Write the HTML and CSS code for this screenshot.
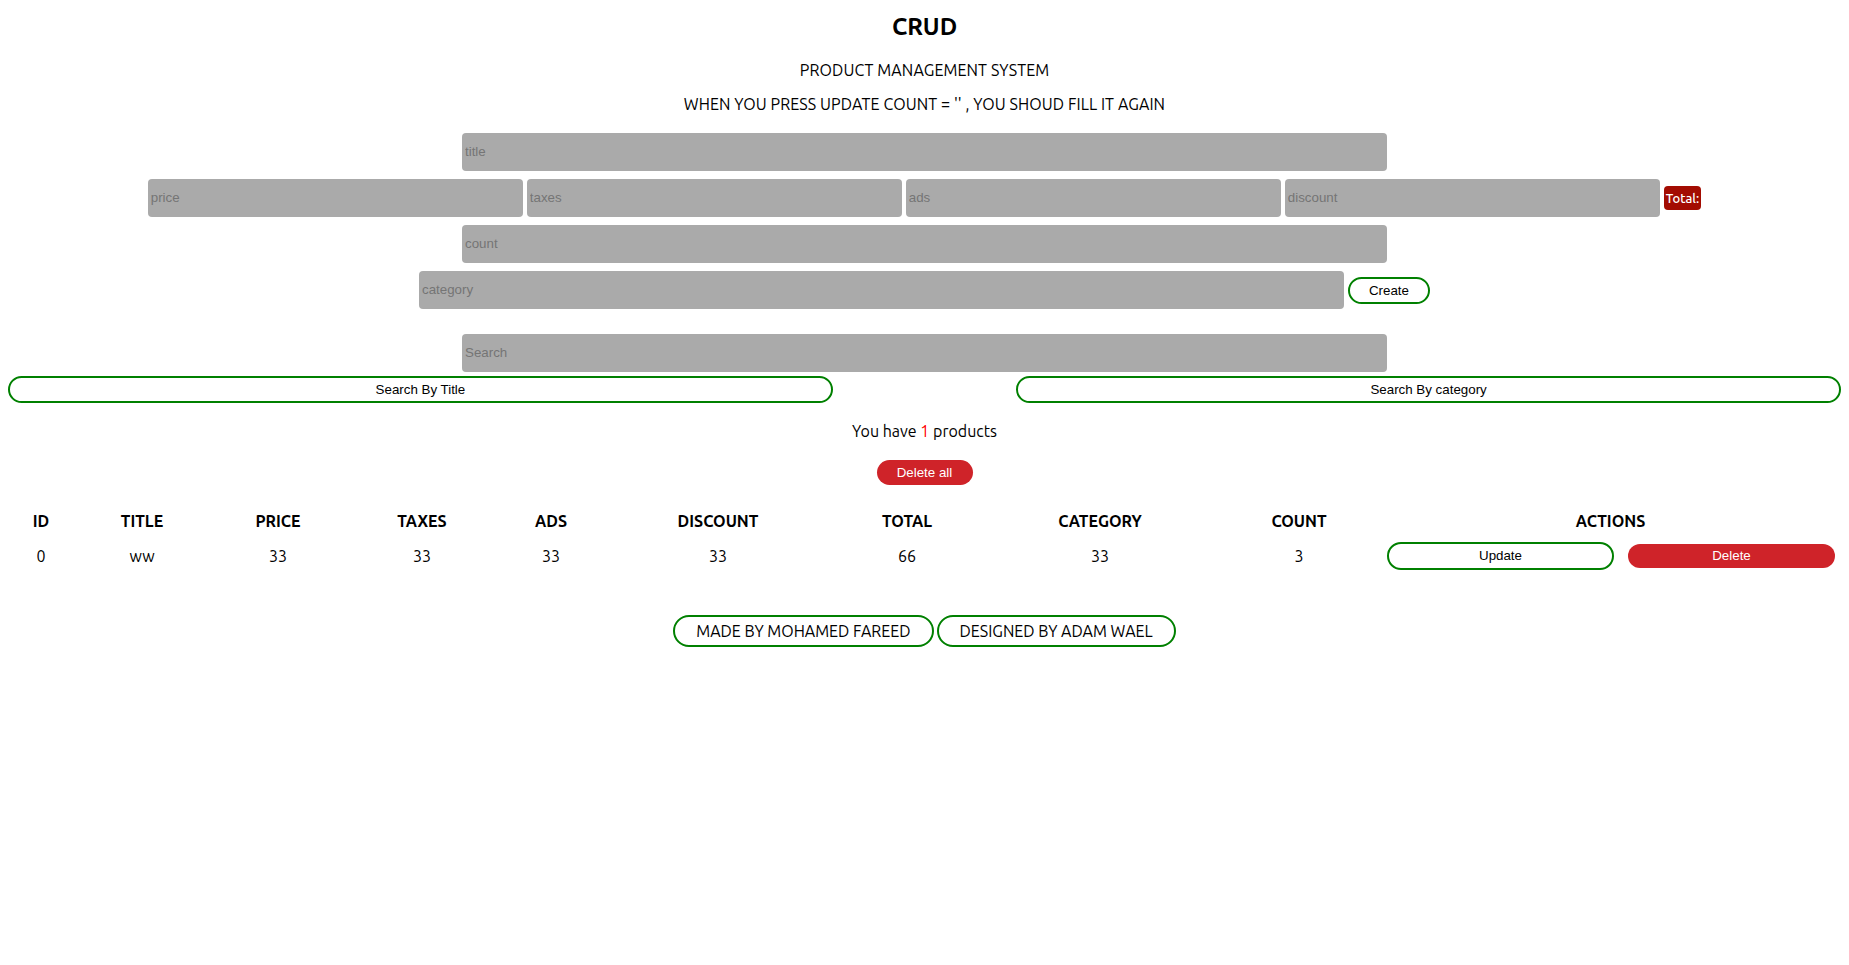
FILE: index.html
```html
<!DOCTYPE html>
<html lang="en">
<head>
<meta charset="UTF-8">
<title>CRUD</title>
<link rel="stylesheet" href="styles.css">
</head>
<body>
<header class="head">
  <h1 class="brand">CRUD</h1>
  <p class="sub">PRODUCT MANAGEMENT SYSTEM</p>
  <p class="warn">WHEN YOU PRESS UPDATE COUNT = '' , YOU SHOUD FILL IT AGAIN</p>
</header>

<section class="form">
  <div class="row"><input class="field wide" type="text" placeholder="title"></div>
  <div class="row">
    <input class="field price" type="number" placeholder="price">
    <input class="field price" type="number" placeholder="taxes">
    <input class="field price" type="number" placeholder="ads">
    <input class="field price" type="number" placeholder="discount">
    <small class="total">Total:</small>
  </div>
  <div class="row"><input class="field wide" type="number" placeholder="count"></div>
  <div class="row">
    <input class="field wide" type="text" placeholder="category">
    <button class="btn-create">Create</button>
  </div>
</section>

<section class="search">
  <div class="row"><input class="field wide search-field" type="text" placeholder="Search"></div>
  <div class="search-btns">
    <button class="btn-outline btn-search">Search By Title</button>
    <button class="btn-outline btn-search">Search By category</button>
  </div>
</section>

<p class="count-line">You have <span class="num">1</span> products</p>
<div class="delall-wrap"><button class="btn-red btn-delall">Delete all</button></div>

<table class="tbl">
  <colgroup>
    <col class="c-id"><col class="c-title"><col class="c-price"><col class="c-taxes"><col class="c-ads"><col class="c-disc"><col class="c-total"><col class="c-cat"><col class="c-count"><col class="c-upd"><col class="c-del">
  </colgroup>
  <thead>
    <tr>
      <th>ID</th><th>TITLE</th><th>PRICE</th><th>TAXES</th><th>ADS</th><th>DISCOUNT</th><th>TOTAL</th><th>CATEGORY</th><th>COUNT</th><th colspan="2">ACTIONS</th>
    </tr>
  </thead>
  <tbody>
    <tr>
      <td>0</td><td>ww</td><td>33</td><td>33</td><td>33</td><td>33</td><td>66</td><td>33</td><td>3</td>
      <td class="act"><button class="btn-outline btn-upd">Update</button></td>
      <td class="act"><button class="btn-red btn-del">Delete</button></td>
    </tr>
  </tbody>
</table>

<footer class="foot">
  <button class="btn-credit">MADE BY MOHAMED FAREED</button>
  <button class="btn-credit">DESIGNED BY ADAM WAEL</button>
</footer>
</body>
</html>
```

FILE: styles.css
```css
* { box-sizing: border-box; }

body {
  margin: 0;
  padding: 0 8px;
  background: #fff;
  color: #000;
  font-family: "Ubuntu", "Lato", "Noto Sans", sans-serif;
  font-size: 16px;
}

.head { text-align: center; }

.brand {
  margin: 13px 0 0;
  font-size: 24px;
  line-height: 28px;
  font-weight: 700;
}

.sub {
  margin: 19px 0 0;
  line-height: 20px;
  letter-spacing: 0.1px;
}

.warn {
  margin: 14px 0 0;
  line-height: 20px;
  letter-spacing: 0.1px;
}

.form {
  margin-top: 19px;
  display: flex;
  flex-direction: column;
  gap: 8px;
}

.row {
  display: flex;
  justify-content: center;
  align-items: center;
  gap: 4px;
}

.field {
  height: 38px;
  border: none;
  border-radius: 4px;
  background: #aaaaaa;
  padding: 0 3px 1px;
  font-family: "Liberation Sans", Arial, sans-serif;
  font-size: 13.33px;
  color: #000;
  outline: none;
}

.field::placeholder { color: #757575; }

.wide { width: 925px; }
.price { width: 375px; }

.total {
  background: #a30c02;
  color: #fff;
  border-radius: 4px;
  padding: 0 2px;
  height: 24px;
  line-height: 24px;
  font-size: 13px;
  font-weight: 500;
}

.btn-create {
  width: 82px;
  height: 27px;
  border: 2px solid #008000;
  border-radius: 14px;
  background: #fff;
  font-family: "Liberation Sans", Arial, sans-serif;
  font-size: 13.33px;
  color: #000;
}

.search { margin-top: 25px; }
.search-field { height: 38px; }

.search-btns {
  margin-top: 4px;
  display: flex;
  justify-content: space-between;
}

.btn-outline {
  border: 2px solid #008000;
  background: #fff;
  border-radius: 14px;
  font-family: "Liberation Sans", Arial, sans-serif;
  font-size: 13.33px;
  color: #000;
}

.btn-search {
  width: 45%;
  height: 27px;
}

.count-line {
  margin: 18px 0 0;
  text-align: center;
  line-height: 20px;
}

.num { color: #ff0000; }

.delall-wrap {
  margin-top: 19px;
  display: flex;
  justify-content: center;
}

.btn-red {
  border: none;
  background: #cf2329;
  color: #fff;
  border-radius: 14px;
  font-family: "Liberation Sans", Arial, sans-serif;
  font-size: 13.33px;
}

.btn-delall {
  width: 96px;
  height: 25px;
}

.tbl {
  margin-top: 20px;
  width: 100%;
  table-layout: fixed;
  border-collapse: collapse;
  text-align: center;
}

.c-id { width: 66px; }
.c-title { width: 136px; }
.c-price { width: 136px; }
.c-taxes { width: 152px; }
.c-ads { width: 106px; }
.c-disc { width: 228px; }
.c-total { width: 150px; }
.c-cat { width: 236px; }
.c-count { width: 162px; }
.c-upd { width: 241px; }
.c-del { width: 220px; }

.tbl th {
  height: 32px;
  padding: 0;
  font-weight: 700;
  font-size: 16px;
}

.tbl td {
  height: 37px;
  padding: 0;
  font-size: 16px;
  vertical-align: middle;
}

.act { padding: 0 7px !important; }

.btn-upd {
  width: 100%;
  height: 28px;
}

.btn-del {
  width: 207px;
  height: 24px;
}

.foot {
  margin-top: 41px;
  display: flex;
  justify-content: center;
  gap: 3px;
}

.btn-credit {
  height: 32px;
  padding: 0 21px;
  border: 2px solid #008000;
  border-radius: 16px;
  background: #fff;
  color: #000;
  font-family: "Ubuntu", "Lato", "Noto Sans", sans-serif;
  font-size: 16px;
}
```
